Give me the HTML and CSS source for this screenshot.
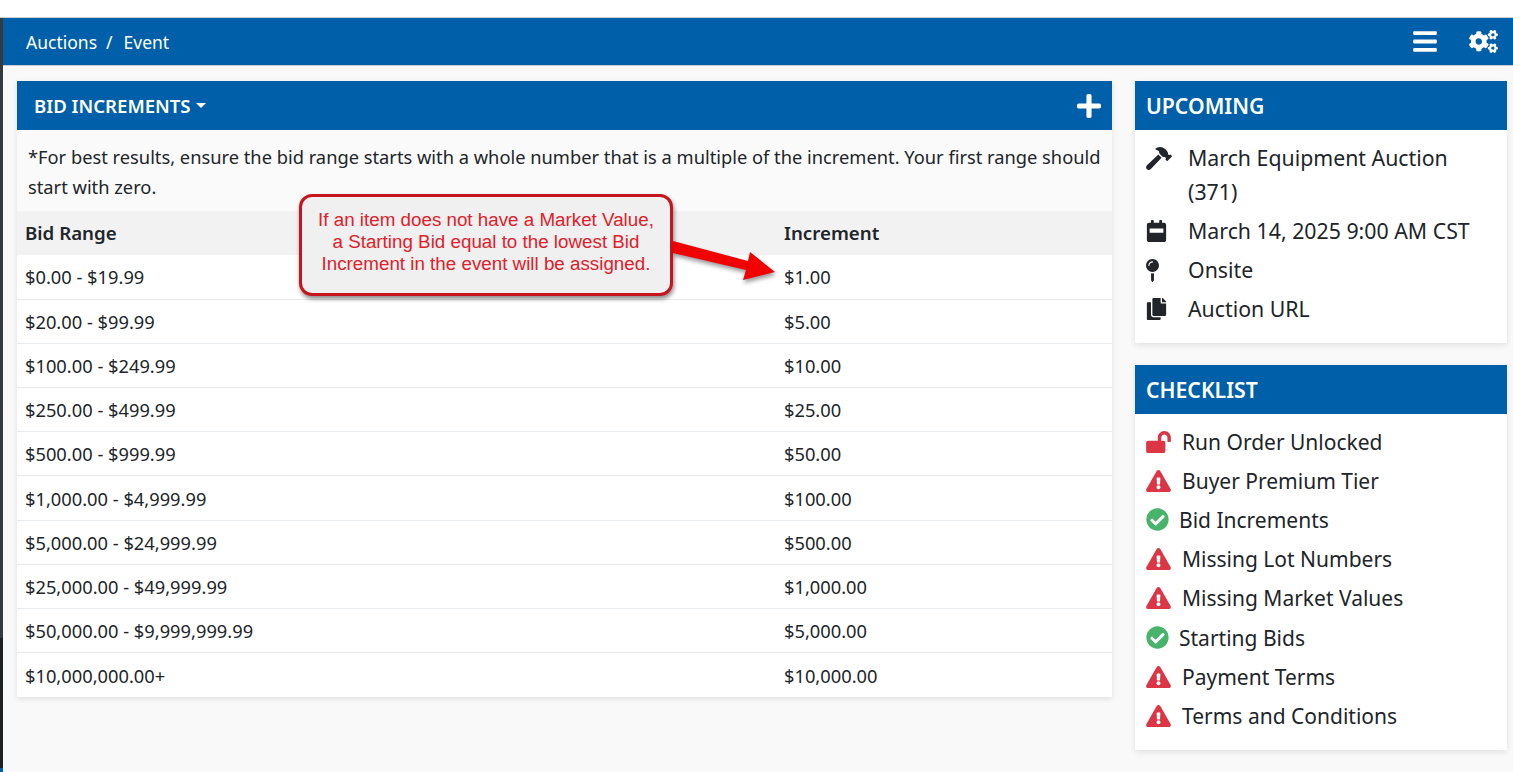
FILE: index.html
```html
<!DOCTYPE html>
<html lang="en">
<head>
  <meta charset="UTF-8">
  <title>Bid Increments</title>
  <link rel="stylesheet" href="styles.css">
</head>
<body>

  <svg class="defs" width="0" height="0">
    <symbol id="i-bars" viewBox="0 0 448 512"><path d="M16 132h416c8.837 0 16-7.163 16-16V76c0-8.837-7.163-16-16-16H16C7.163 60 0 67.163 0 76v40c0 8.837 7.163 16 16 16zm0 160h416c8.837 0 16-7.163 16-16v-40c0-8.837-7.163-16-16-16H16c-8.837 0-16 7.163-16 16v40c0 8.837 7.163 16 16 16zm0 160h416c8.837 0 16-7.163 16-16v-40c0-8.837-7.163-16-16-16H16c-8.837 0-16 7.163-16 16v40c0 8.837 7.163 16 16 16z"/></symbol>
    <symbol id="i-plus" viewBox="0 0 448 512"><path d="M416 208H272V64c0-17.67-14.33-32-32-32h-32c-17.67 0-32 14.33-32 32v144H32c-17.67 0-32 14.33-32 32v32c0 17.67 14.33 32 32 32h144v144c0 17.67 14.33 32 32 32h32c17.67 0 32-14.33 32-32V304h144c17.67 0 32-14.33 32-32v-32c0-17.67-14.33-32-32-32z"/></symbol>
    <symbol id="i-warn" viewBox="0 0 576 512"><path d="M569.517 440.013C587.975 472.007 564.806 512 527.94 512H48.054c-36.937 0-59.999-40.055-41.577-71.987L246.423 23.985c18.467-32.009 64.72-31.951 83.154 0l239.94 416.028zM288 354c-25.405 0-46 20.595-46 46s20.595 46 46 46 46-20.595 46-46-20.595-46-46-46zm-43.673-165.346l7.418 136c.347 6.364 5.609 11.346 11.982 11.346h48.546c6.373 0 11.635-4.982 11.982-11.346l7.418-136c.375-6.874-5.098-12.654-11.982-12.654h-63.383c-6.884 0-12.356 5.78-11.981 12.654z"/></symbol>
    <symbol id="i-check" viewBox="0 0 512 512"><path d="M504 256c0 136.967-111.033 248-248 248S8 392.967 8 256 119.033 8 256 8s248 111.033 248 248zM227.314 387.314l184-184c6.248-6.248 6.248-16.379 0-22.627l-22.627-22.627c-6.248-6.249-16.379-6.249-22.628 0L216 308.118l-70.059-70.059c-6.248-6.248-16.379-6.248-22.628 0l-22.627 22.627c-6.248 6.248-6.248 16.379 0 22.627l104 104c6.249 6.249 16.379 6.249 22.628.001z"/></symbol>
    <symbol id="i-copy" viewBox="0 0 448 512"><path d="M320 448v40c0 13.255-10.745 24-24 24H24c-13.255 0-24-10.745-24-24V120c0-13.255 10.745-24 24-24h72v296c0 30.879 25.121 56 56 56h168zm0-344V0H152c-13.255 0-24 10.745-24 24v368c0 13.255 10.745 24 24 24h272c13.255 0 24-10.745 24-24V128H344c-13.2 0-24-10.8-24-24zm120.971-31.029L375.029 7.029A24 24 0 0 0 358.059 0H352v96h96v-6.059a24 24 0 0 0-7.029-16.97z"/></symbol>
    <symbol id="i-pin" viewBox="0 0 288 512"><path d="M112 316.94v156.69l22.02 33.02c4.75 7.12 15.22 7.12 19.97 0L176 473.63V316.94c-10.39 1.92-21.06 3.06-32 3.06s-21.61-1.14-32-3.06zM144 0C64.47 0 0 64.47 0 144s64.47 144 144 144 144-64.47 144-144S223.53 0 144 0zm0 76c-37.5 0-68 30.5-68 68 0 6.62-5.38 12-12 12s-12-5.38-12-12c0-50.73 41.28-92 92-92 6.62 0 12 5.38 12 12s-5.38 12-12 12z"/></symbol>
    <symbol id="i-unlock" viewBox="0 0 576 512"><path d="M423.5 0C339.5.3 272 69.5 272 153.5V224H48c-26.5 0-48 21.5-48 48v192c0 26.5 21.5 48 48 48h352c26.5 0 48-21.5 48-48V272c0-26.5-21.5-48-48-48h-48v-71.1c0-39.6 31.7-72.5 71.3-72.9 40-.4 72.7 32.1 72.7 72v80c0 13.3 10.7 24 24 24h32c13.3 0 24-10.7 24-24v-80C576 68 507.5-.3 423.5 0z"/></symbol>
    <symbol id="i-hammer" viewBox="0 0 576 512"><path d="M571.31 193.94l-22.63-22.63c-6.25-6.25-16.38-6.25-22.63 0l-11.31 11.31-28.9-28.9c5.63-21.31.36-44.9-16.35-61.61l-45.25-45.25c-62.48-62.48-163.79-62.48-226.28 0l90.51 45.25v18.75c0 16.97 6.74 33.25 18.75 45.25l49.14 49.14c16.71 16.71 40.3 21.98 61.61 16.35l28.9 28.9-11.31 11.31c-6.25 6.25-6.25 16.38 0 22.63l22.63 22.63c6.25 6.25 16.38 6.25 22.63 0l90.51-90.51c6.23-6.24 6.23-16.37-.02-22.62zm-286.72-15.2c-3.7-3.7-6.84-7.79-9.85-11.95L19.64 404.96c-25.57 23.88-26.26 64.19-1.53 88.93s65.05 24.05 88.93-1.53l238.13-255.07c-3.96-2.91-7.9-5.87-11.44-9.41l-49.14-49.14z"/></symbol>
    <symbol id="i-calendar" viewBox="0 0 448 512"><path fill-rule="evenodd" d="M400 64h-48V16c0-8.8-7.2-16-16-16h-32c-8.8 0-16 7.2-16 16v48H160V16c0-8.8-7.2-16-16-16h-32c-8.8 0-16 7.2-16 16v48H48C21.5 64 0 85.5 0 112v352c0 26.5 21.5 48 48 48h352c26.5 0 48-21.5 48-48V112c0-26.5-21.5-48-48-48zM64 200h320v96H64z"/></symbol>
    <symbol id="i-cogs" viewBox="0 0 640 512"><path d="M512.1 191l-8.2 14.3c-3 5.3-9.4 7.5-15.1 5.4-11.8-4.4-22.6-10.7-32.1-18.6-4.6-3.8-5.8-10.5-2.8-15.7l8.2-14.3c-6.9-8-12.3-17.3-15.9-27.4h-16.5c-6 0-11.2-4.3-12.2-10.3-2-12-2.1-24.6 0-37.1 1-6 6.2-10.4 12.2-10.4h16.5c3.6-10.1 9-19.4 15.9-27.4l-8.2-14.3c-3-5.2-1.9-11.9 2.8-15.7 9.5-7.9 20.4-14.2 32.1-18.6 5.7-2.1 12.1.1 15.1 5.4l8.2 14.3c10.5-1.9 21.2-1.9 31.7 0L552 6.3c3-5.3 9.4-7.5 15.1-5.4 11.8 4.4 22.6 10.7 32.1 18.6 4.6 3.8 5.8 10.5 2.8 15.7l-8.2 14.3c6.9 8 12.3 17.3 15.9 27.4h16.5c6 0 11.2 4.3 12.2 10.3 2 12 2.1 24.6 0 37.1-1 6-6.2 10.4-12.2 10.4h-16.5c-3.6 10.1-9 19.4-15.9 27.4l8.2 14.3c3 5.2 1.9 11.9-2.8 15.7-9.5 7.9-20.4 14.2-32.1 18.6-5.7 2.1-12.1-.1-15.1-5.4l-8.2-14.3c-10.4 1.9-21.2 1.9-31.7 0zm-10.5-58.8c38.5 29.6 82.4-14.3 52.8-52.8-38.5-29.7-82.4 14.3-52.8 52.8zM386.3 286.1l33.7 16.8c10.1 5.8 14.5 18.1 10.5 29.1-8.9 24.2-26.4 46.4-42.6 65.8-7.4 8.9-20.2 11.1-30.3 5.3l-29.1-16.8c-16 13.7-34.6 24.6-54.9 31.7v33.6c0 11.6-8.3 21.6-19.7 23.6-24.6 4.2-50.4 4.4-75.9 0-11.5-2-20-11.9-20-23.6V418c-20.3-7.2-38.9-18-54.9-31.7L74 403c-10 5.8-22.9 3.6-30.3-5.3-16.2-19.4-33.3-41.6-42.2-65.7-4-10.9.4-23.2 10.5-29.1l33.3-16.8c-3.9-20.9-3.9-42.4 0-63.4L12 205.8c-10.1-5.8-14.6-18.1-10.5-29 8.9-24.2 26-46.4 42.2-65.8 7.4-8.9 20.2-11.1 30.3-5.3l29.1 16.8c16-13.7 34.6-24.6 54.9-31.7V57.1c0-11.5 8.2-21.5 19.6-23.5 24.6-4.2 50.5-4.4 76-.1 11.5 2 20 11.9 20 23.6v33.6c20.3 7.2 38.9 18 54.9 31.7l29.1-16.8c10-5.8 22.9-3.6 30.3 5.3 16.2 19.4 33.2 41.6 42.1 65.8 4 10.9.1 23.2-10 29.1l-33.7 16.8c3.9 21 3.9 42.5 0 63.5zm-117.6 21.1c59.2-77-28.7-164.9-105.7-105.7-59.2 77 28.7 164.9 105.7 105.7zm243.4 182.7l-8.2 14.3c-3 5.3-9.4 7.5-15.1 5.4-11.8-4.4-22.6-10.7-32.1-18.6-4.6-3.8-5.8-10.5-2.8-15.7l8.2-14.3c-6.9-8-12.3-17.3-15.9-27.4h-16.5c-6 0-11.2-4.3-12.2-10.3-2-12-2.1-24.6 0-37.1 1-6 6.2-10.4 12.2-10.4h16.5c3.6-10.1 9-19.4 15.9-27.4l-8.2-14.3c-3-5.2-1.9-11.9 2.8-15.7 9.5-7.9 20.4-14.2 32.1-18.6 5.7-2.1 12.1.1 15.1 5.4l8.2 14.3c10.5-1.9 21.2-1.9 31.7 0l8.2-14.3c3-5.3 9.4-7.5 15.1-5.4 11.8 4.4 22.6 10.7 32.1 18.6 4.6 3.8 5.8 10.5 2.8 15.7l-8.2 14.3c6.9 8 12.3 17.3 15.9 27.4h16.5c6 0 11.2 4.3 12.2 10.3 2 12 2.1 24.6 0 37.1-1 6-6.2 10.4-12.2 10.4h-16.5c-3.6 10.1-9 19.4-15.9 27.4l8.2 14.3c3 5.2 1.9 11.9-2.8 15.7-9.5 7.9-20.4 14.2-32.1 18.6-5.7 2.1-12.1-.1-15.1-5.4l-8.2-14.3c-10.4 1.9-21.2 1.9-31.7 0zM501.6 431c38.5 29.6 82.4-14.3 52.8-52.8-38.5-29.6-82.4 14.3-52.8 52.8z"/></symbol>
  </svg>

  <div class="app">
    <div class="topgap"></div>
    <div class="shell">
      <div class="rail"></div>
      <div class="content">
        <header class="crumbbar">
          <div class="crumbs"><span>Auctions</span><span class="sep">/</span><span>Event</span></div>
          <div class="crumb-actions">
            <svg class="ic-bars"><use href="#i-bars"/></svg>
            <svg class="ic-cogs"><use href="#i-cogs"/></svg>
          </div>
        </header>

        <main class="columns">
          <section class="card">
            <div class="card-head head-main">
              <span class="dropdown">BID INCREMENTS</span>
              <svg class="ic-plus"><use href="#i-plus"/></svg>
            </div>
            <p class="note">*For best results, ensure the bid range starts with a whole number that is a multiple of the increment. Your first range should start with zero.</p>
            <table class="bids">
              <thead>
                <tr><th>Bid Range</th><th>Increment</th></tr>
              </thead>
              <tbody>
                <tr><td>$0.00 - $19.99</td><td>$1.00</td></tr>
                <tr><td>$20.00 - $99.99</td><td>$5.00</td></tr>
                <tr><td>$100.00 - $249.99</td><td>$10.00</td></tr>
                <tr><td>$250.00 - $499.99</td><td>$25.00</td></tr>
                <tr><td>$500.00 - $999.99</td><td>$50.00</td></tr>
                <tr><td>$1,000.00 - $4,999.99</td><td>$100.00</td></tr>
                <tr><td>$5,000.00 - $24,999.99</td><td>$500.00</td></tr>
                <tr><td>$25,000.00 - $49,999.99</td><td>$1,000.00</td></tr>
                <tr><td>$50,000.00 - $9,999,999.99</td><td>$5,000.00</td></tr>
                <tr><td>$10,000,000.00+</td><td>$10,000.00</td></tr>
              </tbody>
            </table>
          </section>

          <aside class="side">
            <section class="card">
              <div class="card-head">UPCOMING</div>
              <ul class="info">
                <li><span class="info-ic"><svg class="ic-hammer"><use href="#i-hammer"/></svg></span><span>March Equipment Auction (371)</span></li>
                <li><span class="info-ic"><svg class="ic-calendar"><use href="#i-calendar"/></svg></span><span>March 14, 2025 9:00 AM CST</span></li>
                <li><span class="info-ic"><svg class="ic-pin"><use href="#i-pin"/></svg></span><span>Onsite</span></li>
                <li><span class="info-ic"><svg class="ic-copy"><use href="#i-copy"/></svg></span><span>Auction URL</span></li>
              </ul>
            </section>

            <section class="card">
              <div class="card-head">CHECKLIST</div>
              <ul class="checks">
                <li><svg class="ic-state red"><use href="#i-unlock"/></svg>Run Order Unlocked</li>
                <li><svg class="ic-state red"><use href="#i-warn"/></svg>Buyer Premium Tier</li>
                <li><svg class="ic-ok"><use href="#i-check"/></svg>Bid Increments</li>
                <li><svg class="ic-state red"><use href="#i-warn"/></svg>Missing Lot Numbers</li>
                <li><svg class="ic-state red"><use href="#i-warn"/></svg>Missing Market Values</li>
                <li><svg class="ic-ok"><use href="#i-check"/></svg>Starting Bids</li>
                <li><svg class="ic-state red"><use href="#i-warn"/></svg>Payment Terms</li>
                <li><svg class="ic-state red"><use href="#i-warn"/></svg>Terms and Conditions</li>
              </ul>
            </section>
          </aside>
        </main>
      </div>
    </div>
  </div>

  <!-- annotation pasted on top of the screenshot -->
  <div class="callout">If an item does not have a Market Value, a Starting Bid equal to the lowest Bid Increment in the event will be assigned.</div>
  <svg class="callout-arrow" width="120" height="50" viewBox="0 0 120 50">
    <path d="M2 3 L77 23 L79 14 L104 34 L72 42 L75 32 L2 15 Z"/>
  </svg>

</body>
</html>
```

FILE: styles.css
```css
* {
  box-sizing: border-box;
}
html, body {
  height: 100%;
}
body {
  margin: 0;
  overflow: hidden;
  background: #ffffff;
  color: #212529;
  font-family: "Noto Sans", "Open Sans", sans-serif;
  font-size: 18.3px;
}
.defs {
  position: absolute;
}
svg {
  fill: currentColor;
  display: block;
  flex: none;
}
.app {
  height: 100%;
  display: flex;
  flex-direction: column;
}
.topgap {
  height: 18px;
  background: #ffffff;
  border-bottom: 1px solid #c9ced2;
}
.shell {
  flex: 1;
  display: flex;
  min-height: 0;
}
.rail {
  width: 3px;
  background: linear-gradient(to bottom, #343a40 0, #343a40 620px, #1d2124 620px, #1d2124 750px, #005fa9 750px);
}
.content {
  flex: 1;
  background: #f9f9f9;
}

.crumbbar {
  height: 48px;
  display: flex;
  align-items: center;
  justify-content: space-between;
  padding: 0 15px 0 23px;
  background: #005fa9;
  color: #ffffff;
  border-bottom: 1px solid #c9ced2;
}
.crumbs {
  display: flex;
  font-size: 17.5px;
}
.sep {
  margin: 0 11px 0 9px;
}
.crumb-actions {
  display: flex;
  align-items: center;
  gap: 32px;
}
.ic-bars {
  width: 24px;
  height: 27px;
}
.ic-cogs {
  width: 29px;
  height: 23px;
}

.columns {
  display: grid;
  grid-template-columns: 1095px 372px;
  gap: 23px;
  align-items: start;
  padding: 15px 0 0 14px;
}
.side {
  display: flex;
  flex-direction: column;
  gap: 22px;
}
.card {
  background: #ffffff;
  box-shadow: 0 2px 6px rgba(0, 0, 0, 0.1);
}
.card-head {
  height: 49px;
  display: flex;
  align-items: center;
  padding: 0 11px;
  background: #005fa9;
  color: #ffffff;
  font-size: 21.2px;
  font-weight: 600;
}
.head-main {
  justify-content: space-between;
  padding: 0 11px 0 17px;
}
.dropdown {
  display: flex;
  align-items: center;
  font-size: 18.6px;
}
.dropdown::after {
  content: "";
  margin-left: 5px;
  border-top: 5px solid #ffffff;
  border-left: 5px solid transparent;
  border-right: 5px solid transparent;
}
.ic-plus {
  width: 24px;
  height: 28px;
}
.note {
  margin: 0;
  padding: 12px 11px 9px;
  background: #fafafa;
  line-height: 30px;
}

.bids {
  width: 100%;
  border-collapse: collapse;
  table-layout: fixed;
}
.bids th {
  height: 44px;
  padding: 0 8px 2px;
  text-align: left;
  font-size: 18.7px;
  font-weight: 600;
  background: #f2f2f2;
}
.bids th:first-child {
  width: 759px;
}
.bids td {
  height: 44.2px;
  padding: 0 8px;
  border-top: 1px solid #e9ecef;
}
.bids tbody tr:first-child td {
  border-top: none;
}

.info, .checks {
  list-style: none;
  margin: 0;
  line-height: 34px;
}
.info {
  padding: 11px 11px 12px;
  font-size: 21.3px;
}
.info li {
  display: flex;
  padding-bottom: 5px;
}
.info-ic {
  width: 42px;
  height: 34px;
  flex: none;
  display: flex;
  align-items: center;
}
.ic-hammer {
  width: 26px;
  height: 23px;
}
.ic-calendar {
  width: 21px;
  height: 22px;
}
.ic-pin {
  width: 13px;
  height: 23px;
}
.ic-copy {
  width: 21px;
  height: 22px;
}
.checks {
  padding: 8px 11px 14px;
  font-size: 21px;
}
.checks li {
  display: flex;
  align-items: center;
  height: 39.2px;
}
.ic-state {
  width: 25px;
  height: 22px;
  margin-right: 11px;
}
.red {
  color: #dc3545;
}
.ic-ok {
  width: 23px;
  height: 23px;
  margin-right: 10px;
  color: #48b36b;
}

.callout {
  position: absolute;
  left: 299px;
  top: 194px;
  width: 374px;
  height: 102px;
  display: flex;
  align-items: center;
  padding: 0 14px 7px;
  background: #f0f0f0;
  border: 3px solid #c8141c;
  border-radius: 13px;
  box-shadow: 1px 3px 4px rgba(0, 0, 0, 0.45);
  color: #e0202a;
  font-family: "Liberation Sans", Arial, sans-serif;
  font-size: 18.8px;
  line-height: 22px;
  text-align: center;
}
.callout-arrow {
  position: absolute;
  left: 671px;
  top: 238px;
  overflow: visible;
  fill: #f00000;
  filter: drop-shadow(1px 3px 2px rgba(0, 0, 0, 0.4));
}
```
